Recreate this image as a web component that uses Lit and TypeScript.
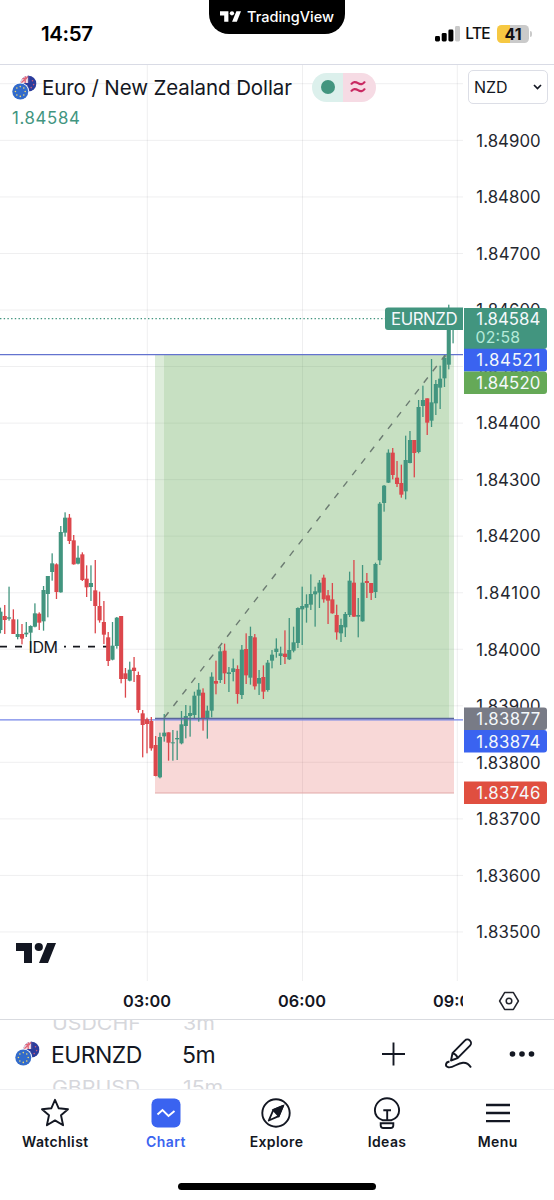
import { LitElement, html, svg, css } from "lit";
import { customElement, property } from "lit/decorators.js";

type Scaled = [string, number, number, number, number];
interface Candle { x: number; up: boolean; high: number; top: number; bottom: number; low: number; }

const GREEN = "#42957f";
const RED = "#dc474c";

// Each block: first bar index, vertical origin, and [direction, high, body top, body bottom, low] in thirds of a pixel.
const blocks: { start: number; origin: number; bars: Scaled[] }[] = [
  { start: -34, origin: 500, bars: [
    ["g",323,335,390,400],["r",315,348,360,402],["g",260,352,356,362],["r",328,358,402,402],["g",358,402,411,418],
    ["r",372,402,416,433],["g",366,398,403,411],["g",376,378,398,455],["g",310,340,380,382],["r",337,341,368,390],
    ["g",258,270,364,392],["g",228,228,282,352],["g",160,190,216,242],["r",190,193,276,297],["g",78,96,277,278],
    ["g",37,53,98,110],["r",42,53,123,132],["r",105,121,193,194],["g",137,173,191,193],["r",157,163,240,243],
    ["r",196,236,262,291],["g",196,249,261,303],["r",180,271,318,400],["r",275,318,361,368],["r",303,366,404,432],
    ["r",396,412,483,498],["g",366,437,479,481],["g",351,353,438,446],["r",348,348,537,550],["r",504,520,537,593],
    ["g",485,509,542,544],["r",471,503,513,546],["r",515,525,630,638],["r",630,640,675,772],["r",653,658,672,760],
    ["r",651,663,745,752],["r",708,735,828,829]] },
  { start: 3, origin: 560, bars: [
    ["g",518,531,652,655],["g",462,518,529,545],["r",517,517,548,602],["g",510,547,550,602],["g",512,534,538,600],
    ["g",453,493,550,553],["g",435,468,498,535],["g",437,459,468,530],["g",395,407,465,475],["g",369,389,407,485],
    ["r",385,398,474,512],["g",437,452,475,536],["g",337,350,452,472],["r",302,363,371,403],["g",260,274,360,369],
    ["r",251,272,340,372],["g",321,337,342,396],["g",296,325,336,364],["r",316,327,402,431],["g",255,269,405,417],
    ["r",220,267,346,372],["g",200,228,353,374],["r",222,232,379,389],["g",330,354,371,405],["r",316,351,395,417],
    ["g",300,308,390,395],["g",270,284,302,325],["g",235,266,276,293],["g",260,280,288,315],["r",211,281,291,312],
    ["g",174,270,298,300],["g",200,247,272,277],["g",142,144,249,264]] },
  { start: 36, origin: 400, bars: [
    ["g",560,618,628,735],["g",583,612,623,668],["g",523,582,614,630],["g",560,574,583,680],["g",540,548,578,624],
    ["r",524,533,598,608],["r",570,586,602,672],["r",549,598,640,641],["r",614,645,697,719],["g",656,675,700,726],
    ["g",636,642,682,711],["g",515,542,645,651],["r",480,548,650,651],["g",594,645,650,712],["g",495,548,664,665],
    ["r",519,543,549,594],["r",549,549,579,600],["g",488,492,576,594],["g",306,311,481,495],["g",255,257,309,335],
    ["g",148,158,248,249],["r",144,158,225,238],["r",183,233,252,261],["r",194,249,284,293],["g",107,180,274,298],
    ["g",93,120,189,190],["r",120,120,159,232]] },
  { start: 63, origin: 290, bars: [
    ["g",330,351,486,490],["g",287,330,348,381],["r",325,325,398,435],["g",207,337,392,411],["g",270,282,340,375],
    ["g",227,266,293,357],["g",195,203,265,291],["g",44,110,224,238],["g",60,84,110,160]] },
];

const candles: Candle[] = blocks.flatMap(({ start, origin, bars }) =>
  bars.map(([dir, h, t, b, l], n) => ({
    x: 147 + (start + n) * 4.311,
    up: dir === "g",
    high: origin + h / 3, top: origin + t / 3, bottom: origin + b / 3, low: origin + l / 3,
  })));

const levels = Array.from({ length: 15 }, (_, k) => ({
  y: 140.7 + 56.54 * k,
  label: (1.849 - k * 0.001).toFixed(5),
}));

const tags = [
  { y: 348.7, h: 22.8, fill: "#3a63f0", label: "1.84521", base: 366.4 },
  { y: 371.5, h: 22.5, fill: "#65a957", label: "1.84520", base: 389 },
  { y: 707.5, h: 22.5, fill: "#787b86", label: "1.83877", base: 724.8 },
  { y: 730, h: 22.5, fill: "#3a63f0", label: "1.83874", base: 747.6 },
  { y: 781.5, h: 22.5, fill: "#e04f40", label: "1.83746", base: 799 },
];

const logo = svg`<path d="M0 0H16V20H8V8H0Z"/><circle cx="22.8" cy="4" r="4.1"/><path d="M31.2 0H40L32 20H23Z"/>`;

@customElement("pair-flags")
export class PairFlags extends LitElement {
  static styles = css`:host { display: block; width: 25px; height: 25px; } svg { display: block; }`;
  render() {
    const stars = Array.from({ length: 8 }, (_, i) => {
      const a = (i * Math.PI) / 4;
      return svg`<circle cx=${8.3 + Math.cos(a) * 4.9} cy=${16.5 + Math.sin(a) * 4.9} r=".8" fill="#f2d96c"/>`;
    });
    return html`<svg width="25" height="25" viewBox="0 0 25 25">
      <defs><clipPath id="c"><circle cx="16.4" cy="8.7" r="7.9"/></clipPath></defs>
      <g clip-path="url(#c)">
        <rect width="25" height="25" fill="#2b3c9c"/>
        <rect x="8" y="0" width="9" height="8" fill="#f1dfe6"/>
        <path d="M8 3.6H15M13.2 0V8M9 8L16.6 1" stroke="#e2667a" stroke-width="1.3"/>
        <path d="M16.6 0V8" stroke="#56519d" stroke-width="1.4"/>
        <circle cx="20.5" cy="5.8" r=".8" fill="#cf5b78"/><circle cx="21.6" cy="9.6" r=".8" fill="#cf5b78"/><circle cx="19.2" cy="12.6" r=".8" fill="#cf5b78"/>
      </g>
      <circle cx="8.3" cy="16.5" r="9" fill="#fff"/>
      <circle cx="8.3" cy="16.5" r="8" fill="#326bcb"/>${stars}
    </svg>`;
  }
}

@customElement("price-chart")
export class PriceChart extends LitElement {
  static styles = css`
    :host { display: block; height: 955px; }
    svg { display: block; }
    text { font-family: Inter, "Liberation Sans", sans-serif; }
    .price { font-size: 16.8px; fill: #25272f; }
    .tag { font-size: 16.8px; fill: #f4f8fb; }
    .time { font-size: 16.3px; font-weight: 600; fill: #14161f; text-anchor: middle; }
    .note { font-size: 16px; fill: #15171d; }
    .count { font-size: 15.8px; fill: #b5ead9; }
  `;
  render() {
    return html`<svg width="554" height="955" viewBox="0 65 554 955">
      <defs>
        <clipPath id="plot"><rect x="0" y="65" width="463" height="955"/></clipPath>
      </defs>
      <g stroke="#2a2e39" stroke-opacity=".075" stroke-width="1">
        ${[84, ...levels.map((l) => l.y)].map((y) => svg`<line x1="0" x2="463" y1=${y - 0.3} y2=${y - 0.3}/>`)}
        ${[147.3, 302.5, 457.3].map((x) => svg`<line x1=${x} x2=${x} y1="65" y2="981"/>`)}
      </g>
      <rect x="155" y="355" width="299" height="364" fill="#50a143" fill-opacity=".2"/>
      <rect x="164" y="355" width="285" height="364" fill="#50a143" fill-opacity=".15"/>
      <rect x="155" y="719" width="299" height="74" fill="#e04f48" fill-opacity=".22"/>
      <path d="M155 793H454" stroke="#e2a9a8" stroke-width="1"/>
      <path d="M0 646.7H7M15 646.7H22M64 646.7H66M73 646.7H80M88 646.7H95M103 646.7H110" stroke="#15171d" stroke-width="1.8"/>
      <path d="M0 354.7H463" stroke="#6373cf" stroke-width="1.2"/>
      <path d="M0 719.9H463" stroke="#7585e8" stroke-width="1.4"/>
      <path d="M0 318.6H386" stroke="#42957f" stroke-width="1.2" stroke-dasharray="1.4 2.3"/>
      <g clip-path="url(#plot)">
        ${candles.map((c) => {
          const color = c.up ? GREEN : RED;
          return svg`<rect x=${c.x - 0.65} y=${c.high} width="1.3" height=${c.low - c.high} fill=${color}/>
            <rect x=${c.x - 2.05} y=${c.top} width="4.1" height=${Math.max(1, c.bottom - c.top)} fill=${color}/>`;
        })}
      </g>
      <path d="M155 718.5H454" stroke="#5a6699" stroke-width="1.7"/>
      <path d="M164.5 717.5L444.5 356H452" fill="none" stroke="#6c7b72" stroke-width="1.4" stroke-dasharray="6.6 8"/>
      <text class="note" x="28.5" y="653" textLength="29.5">IDM</text>
      ${levels.map((l) => svg`<text class="price" x="476.3" y=${l.y + 6} textLength="64.3">${l.label}</text>`)}
      <path d="M464 308H544a3 3 0 0 1 3 3V346a3 3 0 0 1 -3 3H464Z" fill=${GREEN}/>
      <text class="tag" x="476.3" y="324.9" textLength="64">1.84584</text>
      <text class="count" x="475.5" y="343.3" textLength="44.5">02:58</text>
      ${tags.map((t) => svg`
        <path d=${`M464 ${t.y}H544a3 3 0 0 1 3 3V${t.y + t.h - 3}a3 3 0 0 1 -3 3H464Z`} fill=${t.fill}/>
        <text class="tag" x="476.3" y=${t.base} textLength="64">${t.label}</text>`)}
      <path d="M388 307.5H463V330H388a3 3 0 0 1 -3 -3V310.5a3 3 0 0 1 3 -3Z" fill=${GREEN}/>
      <text class="tag" x="391" y="324.9" textLength="66.5">EURNZD</text>
      <g clip-path="url(#plot)">
        <text class="time" x="147" y="1007.3" textLength="48">03:00</text>
        <text class="time" x="302" y="1007.3" textLength="48">06:00</text>
        <text class="time" x="457" y="1007.3" textLength="48">09:00</text>
      </g>
      <g transform="translate(16 943)" fill="#131722">${logo}</g>
      <g fill="none" stroke="#22242c" stroke-width="1.5" stroke-linejoin="round">
        <path d="M504.6 992.6H513.4L518.4 1001L513.4 1009.4H504.6L499.6 1001Z"/><circle cx="509" cy="1001" r="2.8"/>
      </g>
    </svg>`;
  }
}

@customElement("nav-item")
export class NavItem extends LitElement {
  @property() name = "";
  @property() label = "";
  @property({ type: Boolean, reflect: true }) active = false;
  static styles = css`
    :host { flex: 1; display: flex; flex-direction: column; align-items: center; color: #131722; }
    :host([active]) { color: #3a63f0; }
    svg { display: block; }
    .label { font-size: 14px; line-height: 18px; font-weight: 600; letter-spacing: .4px; margin-top: 3px; }
  `;
  icon() {
    switch (this.name) {
      case "star": return svg`<path d="M16 3.8L19.7 12.3L29 13.2L22 19.3L24.1 29.3L16 24.4L7.9 29.3L10 19.3L3 13.2L12.3 12.3Z" stroke-linejoin="round"/>`;
      case "chart": return svg`<rect x="1.5" y="2.5" width="29" height="29" rx="6" fill="#3a63f0" stroke="none"/><path d="M7.5 18.5L12.5 14L18.5 20L24.5 15" stroke="#fff" stroke-width="1.9"/>`;
      case "compass": return svg`<circle cx="16" cy="17" r="13.7"/><path d="M23 10L18.7 20.1L8.8 24.5L13.3 14Z" stroke-linejoin="round"/><path d="M23 10L18.7 20.1L13.3 14Z" fill="#131722"/>`;
      case "idea": return svg`<path d="M11.5 24.2C6.5 22.2 3.9 18.5 3.9 14.4A12.1 12.1 0 0 1 28.1 14.4C28.1 18.5 25.5 22.2 20.5 24.2Z" stroke-linejoin="round"/><path d="M12.3 14.2H20M16.2 14.2V24"/><path d="M9.7 27.3H22.3V29.5A2.6 2.6 0 0 1 19.7 32H12.3A2.6 2.6 0 0 1 9.7 29.5Z"/>`;
      default: return svg`<path d="M4 9H28M4 17H28M4 25.2H28" stroke-width="2.3"/>`;
    }
  }
  render() {
    return html`<svg width="32" height="34" viewBox="0 0 32 34" fill="none" stroke="#131722" stroke-width="1.9">${this.icon()}</svg>
      <span class="label">${this.label}</span>`;
  }
}

@customElement("app-root")
export class AppRoot extends LitElement {
  static styles = css`
    :host { display: flex; flex-direction: column; width: 554px; height: 1200px; background: #fff; color: #131722; overflow: hidden;
      font-family: Inter, "Liberation Sans", sans-serif; }
    svg { display: block; }
    .status { box-sizing: border-box; height: 65px; flex: none; display: grid; grid-template-columns: 209px 136px 1fr; border-bottom: 1px solid #d9dbe5; }
    .clock { padding: 21px 0 0 41px; font-size: 20.5px; line-height: 26px; font-weight: 600; color: #000; letter-spacing: -.35px; }
    .pill { box-sizing: border-box; height: 34px; background: #000; color: #fff; border-radius: 0 0 20px 20px; display: flex; align-items: center; gap: 6px; padding: 0 0 2px 11px; font-size: 14.5px; font-weight: 500; }
    .signal { display: flex; align-items: center; justify-content: flex-end; gap: 5px; padding: 3px 22px 0 0; }
    .lte { font-size: 15.5px; font-weight: 500; color: #111; letter-spacing: -.7px; margin-right: 2px; }
    .battery { display: flex; align-items: center; gap: 1px; }
    .cell { width: 32px; height: 18px; border-radius: 4.5px; background: linear-gradient(90deg, #f6c842 41%, #cacaca 41%); color: #111; font-size: 16px; line-height: 18px; font-weight: 700; text-align: center; }
    .tip { width: 2px; height: 6px; border-radius: 0 2px 2px 0; background: #cacaca; }
    .chart { position: relative; flex: none; height: 954px; overflow: hidden; border-bottom: 1px solid #d9dbe0; }
    .legend { position: absolute; left: 12px; top: 0; }
    .title { display: flex; align-items: center; height: 44px; }
    .name { margin-left: 5px; width: 250px; font-size: 20.5px; letter-spacing: -.1px; white-space: nowrap; }
    .market { display: flex; width: 64px; height: 29px; margin-left: 20px; border-radius: 15px; overflow: hidden; }
    .half { flex: 1; display: flex; align-items: center; justify-content: center; background: #dcf0ec; }
    .half.delay { background: #f6dbe4; padding-right: 3px; }
    .dot { width: 14px; height: 14px; border-radius: 50%; background: #42957f; margin-left: 2px; }
    .last { font-size: 16.8px; line-height: 18px; color: #42957f; letter-spacing: .65px; }
    .currency { position: absolute; box-sizing: border-box; left: 468px; top: 5px; width: 80px; height: 34px; border: 1px solid #dcdee6; border-radius: 5px; background: #fff; display: flex; align-items: center; justify-content: space-between; padding: 0 5px; font-size: 16px; }
    .toolbar { box-sizing: border-box; flex: none; height: 70px; display: grid; grid-template-columns: 51px 131px 157px 1fr; border-bottom: 1px solid #eff0f3; overflow: hidden; }
    .flags { padding: 21px 0 0 15px; }
    .wheel { height: 69px; display: flex; flex-direction: column; align-items: flex-start; justify-content: center; overflow: hidden; white-space: nowrap; }
    .ghost { flex: none; font-size: 18.5px; line-height: 32px; height: 32px; color: #d6d7dc; transform: scaleX(1.15); transform-origin: left; margin-left: 1px; }
    .current { flex: none; font-size: 23px; line-height: 32px; height: 32px; letter-spacing: -.55px; }
    .nav { display: flex; height: 70px; flex: none; padding: 6px 1px 0 0; }
    .home { width: 198px; height: 7px; border-radius: 4px; background: #000; margin: 17px auto 0; }
  `;

  render() {
    return html`
      <div class="status">
        <div class="clock">14:57</div>
        <div class="pill"><svg width="21" height="11" viewBox="0 0 40 20" fill="#fff">${logo}</svg><span>TradingView</span></div>
        <div class="signal">
          <svg width="25" height="17" viewBox="0 0 25 17"><g fill="#000"><rect x="0" y="11" width="5" height="5.5" rx="1.4"/><rect x="6.7" y="8" width="5" height="8.5" rx="1.4"/><rect x="13.4" y="4.5" width="5" height="12" rx="1.4"/></g><rect x="20" y="1" width="5" height="15.5" rx="1.4" fill="#c9c9c9"/></svg>
          <span class="lte">LTE</span>
          <div class="battery"><div class="cell">41</div><div class="tip"></div></div>
        </div>
      </div>
      <div class="chart">
        <price-chart></price-chart>
        <div class="legend">
          <div class="title">
            <pair-flags></pair-flags>
            <span class="name">Euro / New Zealand Dollar</span>
            <div class="market">
              <div class="half"><div class="dot"></div></div>
              <div class="half delay"><svg width="16" height="14" viewBox="0 0 16 14" fill="none" stroke="#c92a62" stroke-width="2.2"><path d="M1 4.5C3 1.5 5.5 1.5 8 3.2S13 4.5 15 1.5M1 11.5C3 8.5 5.5 8.5 8 10.2S13 11.5 15 8.5"/></svg></div>
            </div>
          </div>
          <div class="last">1.84584</div>
        </div>
        <div class="currency"><span>NZD</span><svg width="9" height="6" viewBox="0 0 9 6" fill="none" stroke="#131722" stroke-width="1.7"><path d="M1 1L4.5 4.5L8 1"/></svg></div>
      </div>
      <div class="toolbar">
        <div class="flags"><pair-flags></pair-flags></div>
        <div class="wheel"><span class="ghost">USDCHF</span><span class="current">EURNZD</span><span class="ghost">GBPUSD</span></div>
        <div class="wheel"><span class="ghost">3m</span><span class="current">5m</span><span class="ghost">15m</span></div>
        <svg width="215" height="69" viewBox="339 1020 215 69" fill="none" stroke="#131722" stroke-width="1.9">
          <path d="M382 1054H405M393.5 1042.5V1065.5" stroke-width="1.9"/>
          <path d="M451 1060.5L452.5 1053.2L464.8 1040.6A3.6 3.6 0 0 1 470 1045.7L457.6 1058.2ZM452.5 1053.2C455 1053.7 457 1055.7 457.6 1058.2" stroke-linejoin="round"/>
          <path d="M449.5 1061.5C445.5 1062 444.5 1066.5 448.5 1067.3C453.5 1068 457 1063 463 1062.7C467 1062.5 469.5 1065 471 1067.5"/>
          <g fill="#131722" stroke="none"><circle cx="512.5" cy="1054" r="2.8"/><circle cx="522" cy="1054" r="2.8"/><circle cx="531.5" cy="1054" r="2.8"/></g>
        </svg>
      </div>
      <div class="nav">
        <nav-item name="star" label="Watchlist"></nav-item>
        <nav-item name="chart" label="Chart" active></nav-item>
        <nav-item name="compass" label="Explore"></nav-item>
        <nav-item name="idea" label="Ideas"></nav-item>
        <nav-item name="menu" label="Menu"></nav-item>
      </div>
      <div class="home"></div>`;
  }
}
